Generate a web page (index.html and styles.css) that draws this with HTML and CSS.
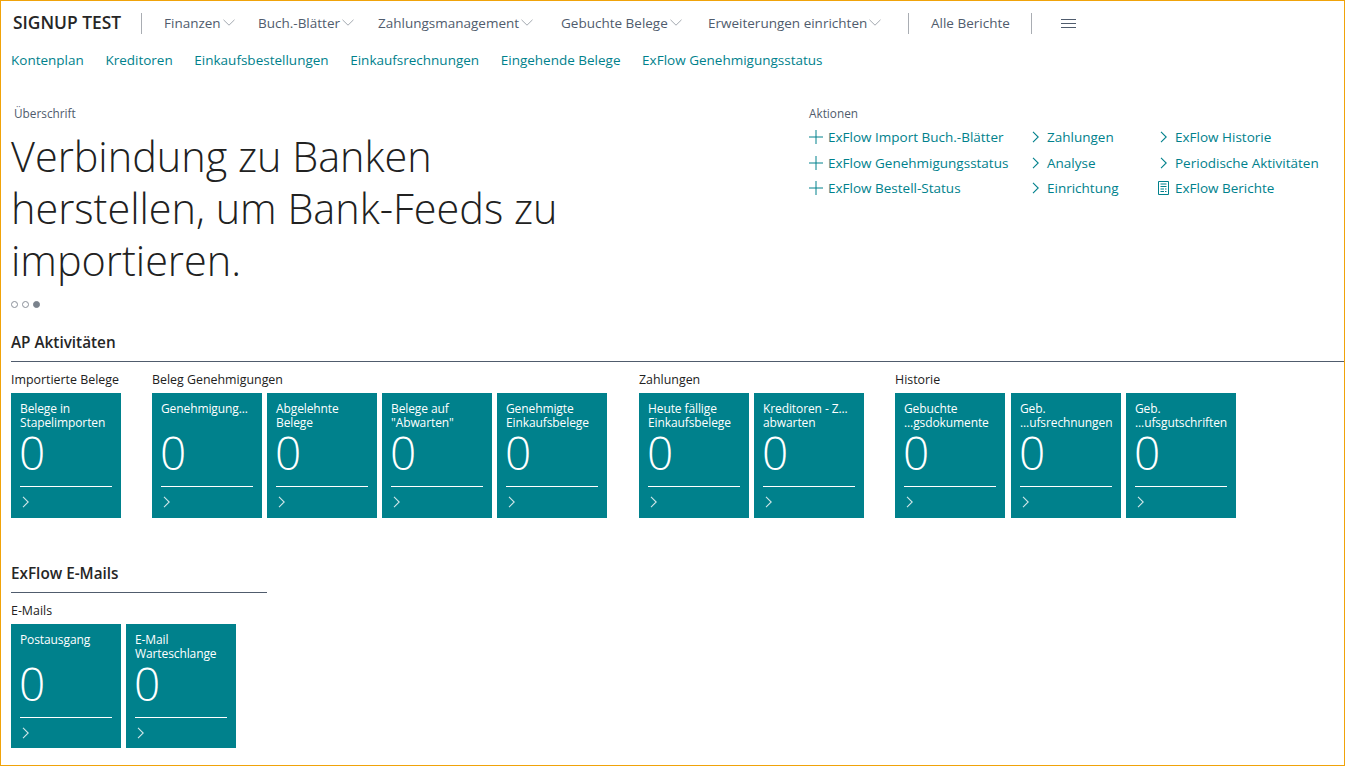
FILE: index.html
```html
<!DOCTYPE html>
<html lang="de">
<head>
    <meta charset="UTF-8">
    <title>SIGNUP TEST</title>
    <link rel="stylesheet" href="styles.css">
</head>
<body>
    <svg class="sprites" width="0" height="0">
        <symbol id="chev-down" viewBox="0 0 12 7"><path d="M.5.8 6 6.2 11.5.8" fill="none" stroke="currentColor"/></symbol>
        <symbol id="chev-right" viewBox="0 0 7 12"><path d="M1 .8 6.2 6 1 11.2" fill="none" stroke="currentColor" stroke-width="1.1"/></symbol>
        <symbol id="plus" viewBox="0 0 14 14"><path d="M7 0v14M0 7h14" fill="none" stroke="currentColor"/></symbol>
        <symbol id="report" viewBox="0 0 11 14"><path d="M.5.5h10v13H.5zM2.5 3h6M2.5 5.5h6M2.5 8h3.500M7 8h1.500M2.500 10.500h3.500M7 10.500h1.500" fill="none" stroke="currentColor"/></symbol>
    </svg>

    <div class="page">
        <nav class="topbar">
            <span class="brand">SIGNUP TEST</span>
            <span class="divider"></span>
            <a class="menu w-fin">Finanzen<svg class="chev"><use href="#chev-down"/></svg></a>
            <a class="menu w-buch">Buch.-Blätter<svg class="chev"><use href="#chev-down"/></svg></a>
            <a class="menu w-zahl">Zahlungsmanagement<svg class="chev"><use href="#chev-down"/></svg></a>
            <a class="menu w-geb">Gebuchte Belege<svg class="chev"><use href="#chev-down"/></svg></a>
            <a class="menu w-erw">Erweiterungen einrichten<svg class="chev"><use href="#chev-down"/></svg></a>
            <span class="divider"></span>
            <a class="menu w-alle">Alle Berichte</a>
            <span class="divider"></span>
            <span class="burger"><i></i><i></i><i></i></span>
        </nav>

        <div class="quicklinks">
            <a>Kontenplan</a>
            <a>Kreditoren</a>
            <a>Einkaufsbestellungen</a>
            <a>Einkaufsrechnungen</a>
            <a>Eingehende Belege</a>
            <a>ExFlow Genehmigungsstatus</a>
        </div>

        <section class="hero">
            <div class="headline">
                <div class="caption indent">Überschrift</div>
                <h1>Verbindung zu Banken herstellen, um Bank-Feeds zu importieren.</h1>
                <div class="dots"><i></i><i></i><i class="on"></i></div>
            </div>
            <div class="actions">
                <div class="caption">Aktionen</div>
                <div class="action-grid">
                    <a><svg class="ico"><use href="#plus"/></svg>ExFlow Import Buch.-Blätter</a>
                    <a><svg class="ico-c"><use href="#chev-right"/></svg>Zahlungen</a>
                    <a><svg class="ico-c last"><use href="#chev-right"/></svg>ExFlow Historie</a>
                    <a><svg class="ico"><use href="#plus"/></svg>ExFlow Genehmigungsstatus</a>
                    <a><svg class="ico-c"><use href="#chev-right"/></svg>Analyse</a>
                    <a><svg class="ico-c last"><use href="#chev-right"/></svg>Periodische Aktivitäten</a>
                    <a><svg class="ico"><use href="#plus"/></svg>ExFlow Bestell-Status</a>
                    <a><svg class="ico-c"><use href="#chev-right"/></svg>Einrichtung</a>
                    <a><svg class="ico-r"><use href="#report"/></svg>ExFlow Berichte</a>
                </div>
            </div>
        </section>

        <section class="cues">
            <h2>AP Aktivitäten</h2>
            <div class="groups">
                <div class="group">
                    <h3>Importierte Belege</h3>
                    <div class="tiles">
                        <a class="tile"><span class="tile-title">Belege in Stapelimporten</span><span class="num">0</span><svg class="go"><use href="#chev-right"/></svg></a>
                    </div>
                </div>
                <div class="group">
                    <h3>Beleg Genehmigungen</h3>
                    <div class="tiles">
                        <a class="tile"><span class="tile-title">Genehmigung...</span><span class="num">0</span><svg class="go"><use href="#chev-right"/></svg></a>
                        <a class="tile"><span class="tile-title">Abgelehnte Belege</span><span class="num">0</span><svg class="go"><use href="#chev-right"/></svg></a>
                        <a class="tile"><span class="tile-title">Belege auf "Abwarten"</span><span class="num">0</span><svg class="go"><use href="#chev-right"/></svg></a>
                        <a class="tile"><span class="tile-title">Genehmigte Einkaufsbelege</span><span class="num">0</span><svg class="go"><use href="#chev-right"/></svg></a>
                    </div>
                </div>
                <div class="group wider">
                    <h3>Zahlungen</h3>
                    <div class="tiles">
                        <a class="tile"><span class="tile-title">Heute fällige Einkaufsbelege</span><span class="num">0</span><svg class="go"><use href="#chev-right"/></svg></a>
                        <a class="tile"><span class="tile-title">Kreditoren - Z... abwarten</span><span class="num">0</span><svg class="go"><use href="#chev-right"/></svg></a>
                    </div>
                </div>
                <div class="group">
                    <h3>Historie</h3>
                    <div class="tiles">
                        <a class="tile"><span class="tile-title">Gebuchte ...gsdokumente</span><span class="num">0</span><svg class="go"><use href="#chev-right"/></svg></a>
                        <a class="tile wider"><span class="tile-title">Geb. ...ufsrechnungen</span><span class="num">0</span><svg class="go"><use href="#chev-right"/></svg></a>
                        <a class="tile"><span class="tile-title">Geb. ...ufsgutschriften</span><span class="num">0</span><svg class="go"><use href="#chev-right"/></svg></a>
                    </div>
                </div>
            </div>
        </section>

        <section class="cues small">
            <h2>ExFlow E-Mails</h2>
            <div class="groups">
                <div class="group">
                    <h3>E-Mails</h3>
                    <div class="tiles">
                        <a class="tile"><span class="tile-title">Postausgang</span><span class="num">0</span><svg class="go"><use href="#chev-right"/></svg></a>
                        <a class="tile"><span class="tile-title">E-Mail Warteschlange</span><span class="num">0</span><svg class="go"><use href="#chev-right"/></svg></a>
                    </div>
                </div>
            </div>
        </section>
    </div>
</body>
</html>
```

FILE: styles.css
```css
* {
    box-sizing: border-box;
}

body {
    margin: 0;
    font-family: "Open Sans", "Noto Sans", sans-serif;
    background: #fff;
    color: #212121;
}

.sprites {
    display: block;
    height: 0;
}

.page {
    height: 766px;
    border: 1px solid #f0a30a;
    overflow: hidden;
}

/* top menu */
.topbar {
    display: flex;
    align-items: center;
    height: 45px;
    padding-left: 12px;
}

.brand {
    width: 128px;
    padding-bottom: 3px;
    font-size: 17.400px;
    font-weight: 600;
    color: #262626;
}

.divider {
    width: 1px;
    height: 21px;
    background: #a9adb3;
    margin-right: 22px;
}

.menu {
    display: flex;
    align-items: center;
    padding-bottom: 2px;
    font-size: 13.500px;
    color: #505c6d;
    white-space: nowrap;
}

.w-fin { width: 94px; }
.w-buch { width: 120px; }
.w-zahl { width: 183px; }
.w-geb { width: 147px; }
.w-erw { width: 200px; }
.w-alle { width: 100px; }

.chev {
    width: 12px;
    height: 7px;
    margin-left: 2px;
    color: #a3a9b0;
}

.burger {
    display: flex;
    flex-direction: column;
    gap: 3px;
    margin-left: 7px;
}

.burger i {
    display: block;
    width: 15px;
    height: 1px;
    background: #505c6d;
}

/* links under the menu */
.quicklinks {
    display: flex;
    gap: 21.600px;
    height: 29px;
    padding-left: 10px;
    align-items: center;
}

.quicklinks a {
    padding-bottom: 2px;
    font-size: 13.500px;
    color: #00818c;
}

/* headline + actions */
.hero {
    display: flex;
    height: 251px;
    padding-top: 30px;
}

.headline {
    width: 808px;
    padding-left: 10px;
}

.caption {
    font-size: 11.800px;
    line-height: 16px;
    color: #505c6d;
}

.indent {
    padding-left: 3px;
}

h1 {
    width: 580px;
    margin: 9px 0 0;
    font-size: 41.400px;
    font-weight: 300;
    line-height: 52px;
    color: #212121;
}

.dots {
    display: flex;
    gap: 4px;
    margin-top: 15px;
}

.dots i {
    width: 7px;
    height: 7px;
    border: 1px solid #8a9099;
    border-radius: 50%;
}

.dots i.on {
    background: #7a828c;
    border-color: #7a828c;
}

.action-grid {
    display: grid;
    grid-template-columns: 223px 126px auto;
    grid-template-rows: 26px 25px 26px;
    margin-top: 3px;
}

.action-grid a {
    display: flex;
    align-items: center;
    font-size: 13.500px;
    color: #00818c;
    white-space: nowrap;
}

.ico {
    width: 14px;
    height: 14px;
    margin-right: 5px;
}

.ico-c {
    width: 7px;
    height: 12px;
    margin-right: 8px;
}

.ico-c.last {
    margin-left: 2px;
}

.ico-r {
    width: 11px;
    height: 14px;
    margin-right: 6px;
}

/* tile sections */
.cues {
    padding-left: 10px;
}

h2 {
    margin: 0;
    height: 36px;
    padding-top: 6px;
    font-size: 15.300px;
    line-height: 20px;
    font-weight: 550;
    color: #262626;
    border-bottom: 1px solid #505c6d;
}

.small {
    margin-top: 39px;
}

.small h2 {
    width: 256px;
}

.small .tile {
    height: 124px;
}

.groups {
    display: flex;
    gap: 31px;
}

.group.wider {
    margin-left: 1px;
}

h3 {
    margin: 0;
    height: 31px;
    padding-top: 10px;
    font-size: 12.400px;
    line-height: 16px;
    font-weight: 500;
    color: #212121;
    white-space: nowrap;
}

.tiles {
    display: flex;
    gap: 5px;
}

.tile {
    display: flex;
    flex-direction: column;
    width: 110px;
    height: 125px;
    padding: 9px 9px 0;
    background: #00818c;
    color: #fff;
}

.tile.wider {
    margin-left: 1px;
}

.tile-title {
    height: 28px;
    font-size: 12px;
    line-height: 14px;
    letter-spacing: -.1px;
}

.num {
    height: 57px;
    font-size: 46px;
    font-weight: 300;
    line-height: 44px;
    text-indent: -1px;
    border-bottom: 1px solid #fff;
}

.go {
    width: 7px;
    height: 12px;
    margin: 9px 0 0 2px;
    color: #cfe6e8;
}
```
